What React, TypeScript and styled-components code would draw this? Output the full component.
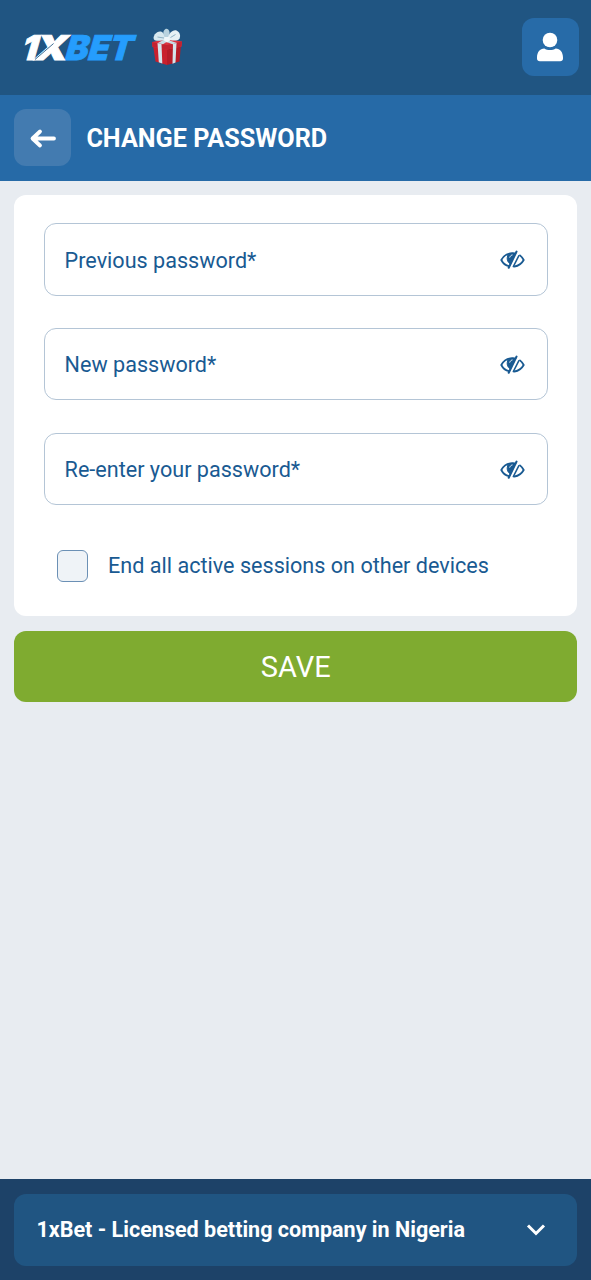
import React from 'react';
import styled, { createGlobalStyle } from 'styled-components';

const Global = createGlobalStyle`
  * { box-sizing: border-box; }
  body { margin: 0; background: #e8ecf1; font-family: Roboto, 'Liberation Sans', sans-serif; }
  button { border: 0; padding: 0; font-family: inherit; color: inherit; }
`;

const Page = styled.div`
  display: flex;
  flex-direction: column;
  height: 1280px;
  width: 100%;
  background: #e8ecf1;
`;
const Header = styled.header`
  display: flex;
  align-items: center;
  height: 95px;
  padding: 0 12px 1px 16px;
  background: #205582;
`;
const Logo = styled.svg`
  display: block;
  width: 130px;
  height: 60px;
`;
const Gift = styled.svg`
  display: block;
  width: 34px;
  height: 38px;
  margin-left: 4px;
`;
const UserButton = styled.button`
  display: flex;
  align-items: center;
  justify-content: center;
  width: 57px;
  height: 58px;
  margin-left: auto;
  padding-right: 1px;
  border-radius: 12px;
  background: #276ba8;
`;
const TitleBar = styled.div`
  display: flex;
  align-items: center;
  height: 86px;
  padding: 0 14.4px 1px;
  background: #266aa7;
`;
const BackButton = styled.button`
  display: flex;
  align-items: center;
  justify-content: center;
  width: 57px;
  height: 57px;
  margin-right: 15px;
  border-radius: 12px;
  background: #437bb0;
`;
const Title = styled.h1`
  margin: 0;
  padding-top: 2px;
  font-size: 25.2px;
  line-height: 30px;
  font-weight: 700;
  color: #fff;
  white-space: nowrap;
`;
const Main = styled.main`
  flex: 1;
  padding: 14.2px 14px 0 14.4px;
`;
const Card = styled.section`
  height: 421px;
  padding: 28px 29px 0 29.2px;
  border-radius: 12px;
  background: #fff;
`;
const Field = styled.label`
  display: flex;
  align-items: center;
  justify-content: space-between;
  height: 72.5px;
  margin-bottom: 32.2px;
  padding: 1.4px 22px 0 20px;
  border: 1.5px solid #b4c5d6;
  border-radius: 12px;
`;
const Label = styled.span`
  padding-top: 1px;
  font-size: 21.6px;
  line-height: 28px;
  color: #195a92;
  white-space: nowrap;
`;
const CheckRow = styled.div`
  display: flex;
  align-items: center;
  height: 32px;
  margin-top: 44.5px;
  padding-left: 13px;
  gap: 20px;
`;
const CheckBox = styled.span`
  width: 31.5px;
  height: 32px;
  border: 1.5px solid #6b90b5;
  border-radius: 6px;
  background: #eff3f7;
`;
const SaveButton = styled.button`
  display: block;
  width: 100%;
  height: 71.2px;
  margin-top: 15px;
  border-radius: 12px;
  background: #7fab30;
  color: #fff;
  font-size: 29px;
  line-height: 72px;
`;
const Footer = styled.footer`
  height: 101px;
  padding: 15px 14px 0 14.4px;
  background: #1d4268;
`;
const Licence = styled.div`
  display: flex;
  align-items: center;
  justify-content: space-between;
  height: 71.5px;
  padding: 0 31px 1px 22px;
  border-radius: 12px;
  background: #205582;
  color: #fff;
  font-size: 21.55px;
  font-weight: 700;
  white-space: nowrap;
`;

const HiddenEye = () => (
  <svg width="25" height="22" viewBox="0 0 25 22" fill="none" stroke="#195a92" strokeWidth="1.8" strokeLinecap="round">
    <path d="M9 17.200C5.500 16.500 2.800 14 1.300 11 3.600 6.700 7.600 4.200 12.500 4.200c1 0 2 .1 3 .4" />
    <path d="M20 6.400c1.600 1.200 2.700 2.800 3.700 4.600-2 3.600-5.200 5.900-9.200 6.500" />
    <path d="M8 6.100c-1.600 3-.9 6.600 2 8.500L15.200 4.500C12.500 3.900 9.900 4.300 8 6.100Z" fill="#195a92" strokeWidth="1" />
    <path d="M16.500 2.600 8.700 18.700" strokeWidth="2.100" />
    <path d="M18.900 6.700 13.300 17.600" strokeWidth="1.500" />
    <path d="M9.800 8.200c.4-1.200 1.200-1.900 2.300-2.200" stroke="#fff" strokeWidth="1" />
  </svg>
);

const fields = ['Previous password*', 'New password*', 'Re-enter your password*'];

export default function App() {
  return (
    <Page>
      <Global />
      <Header>
        <Logo viewBox="0 0 130 60" aria-label="1XBET">
          <g fontFamily="Inter" fontWeight="900" fontSize="34" transform="translate(5 42.500) skewX(-16)" strokeWidth="0.8">
            <text fill="#259dfd" stroke="#259dfd" x="42.500" y="0" textLength="67" lengthAdjust="spacingAndGlyphs">BET</text>
            <text fill="#fff" stroke="#fff" x="-1.500" y="0" textLength="16" lengthAdjust="spacingAndGlyphs">1</text>
            <text fill="#fff" stroke="#fff" x="11.500" y="0" textLength="33" lengthAdjust="spacingAndGlyphs">X</text>
            <path d="m14 0 14-16" fill="none" stroke="#205582" strokeWidth="0.8" />
          </g>
        </Logo>
        <Gift viewBox="0 0 34 38">
          <path d="M3 17 17 19v18L5.500 33.500Z" fill="#c9202d" />
          <path d="M17 19 31 16.500l-1.500 17L17 37Z" fill="#b51b28" />
          <path d="M2 14 17 11l15 2.500-.5 5L17 21.500 2.500 19Z" fill="#dc3341" />
          <path d="m2 14 15 3 15-3.500-.5 5L17 21.500 2.500 19Z" fill="#c32231" />
          <path d="m7.500 15 4 1 .8 19.500-3.500-1.300Zm15.500 1 3.500-1.100-1 19.600-3 1.200Z" fill="#d4e4ec" />
          <path d="M8 15 15 11l12 4-4.500 1.300-6-2.300-3.500 2.200Z" fill="#c7dce6" />
          <path d="M16 11.500C12 12.500 6 14 4 11.500 2 8 7 2.500 11 3.500c2.500 1 4 4 5.500 7Z" fill="#d7e8ef" />
          <path d="M16.500 11c-3.500-3-4.500-8-1-10C19 0 21 5 18.500 10Z" fill="#b9d3df" />
          <path d="M17.500 11.500c1-6 5-10 9-9 4.500 2 4.500 8 1.500 9.500-3 1-7.500.5-10.500-.5Z" fill="#e7f1f5" />
          <path d="M14.500 9h4.500l1 3.500-3 2-3-2Z" fill="#f0f7fa" />
          <path d="m7.500 9 6.500 1m6.500-.5 5-3" fill="none" stroke="#8fb2c5" />
        </Gift>
        <UserButton aria-label="Account">
          <svg width="28" height="32" viewBox="0 0 28 32" fill="#fff">
            <circle cx="14" cy="9" r="7.300" />
            <path d="M1 26.500c0-5.200 2.900-9 7.300-9 1.600 1 3.600 1.500 5.700 1.500s4.100-.5 5.700-1.500c4.400 0 7.300 3.800 7.300 9v1c0 1.700-1.200 2.800-2.800 2.800H3.800C2.200 30.300 1 29.200 1 27.500Z" />
          </svg>
        </UserButton>
      </Header>
      <TitleBar>
        <BackButton aria-label="Back">
          <svg width="28" height="22" viewBox="0 0 28 22" fill="none" stroke="#fff" strokeWidth="3.800" strokeLinecap="round" strokeLinejoin="round">
            <path d="M25 11.500H4M11 4.500l-7.500 7 7.500 7" />
          </svg>
        </BackButton>
        <Title>CHANGE PASSWORD</Title>
      </TitleBar>
      <Main>
        <Card>
          {fields.map((name) => (
            <Field key={name}>
              <Label>{name}</Label>
              <HiddenEye />
            </Field>
          ))}
          <CheckRow>
            <CheckBox />
            <Label>End all active sessions on other devices</Label>
          </CheckRow>
        </Card>
        <SaveButton>SAVE</SaveButton>
      </Main>
      <Footer>
        <Licence>
          <span>1xBet - Licensed betting company in Nigeria</span>
          <svg width="20" height="14" viewBox="0 0 20 14" fill="none" stroke="#fff" strokeWidth="3">
            <path d="m2 3.500 8 8 8-8" />
          </svg>
        </Licence>
      </Footer>
    </Page>
  );
}
